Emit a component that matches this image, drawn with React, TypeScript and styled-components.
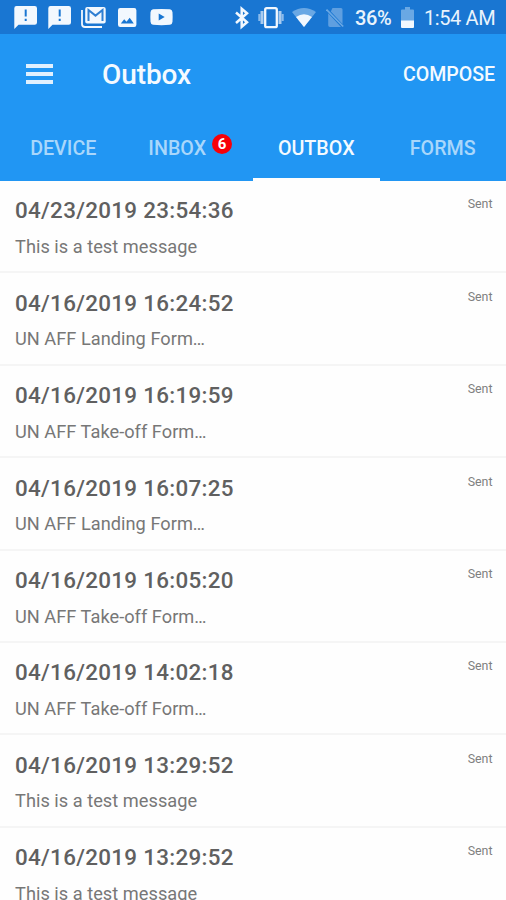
import React from 'react';
import styled, { createGlobalStyle } from 'styled-components';

const GlobalStyle = createGlobalStyle`
  * { box-sizing: border-box; }
  html, body { margin: 0; height: 100%; overflow: hidden; background: #fefefe; }
  body { font-family: Roboto, sans-serif; }
`;

const Screen = styled.div`
  width: 506px;
  height: 900px;
  overflow: hidden;
  display: flex;
  flex-direction: column;
  background: #fefefe;
`;

const StatusBar = styled.header`
  flex: none;
  height: 34px;
  padding: 0 11px 0 14px;
  display: flex;
  align-items: center;
  justify-content: space-between;
  background: #1976d2;
  color: #e9f3fc;
`;

const StatusGroup = styled.div`
  display: flex;
  align-items: center;
`;

const StatusIcon = styled.svg<{ $w: number; $gap?: number }>`
  display: block;
  flex: none;
  width: ${p => p.$w}px;
  height: 34px;
  margin-right: ${p => p.$gap ?? 0}px;
  fill: #f2f8fe;
`;

const StatusText = styled.span<{ $width: number; $gap?: number; $weight?: number; $spacing?: number }>`
  width: ${p => p.$width}px;
  margin-right: ${p => p.$gap ?? 0}px;
  font-size: 20px;
  line-height: 34px;
  padding-top: 2px;
  font-weight: ${p => p.$weight ?? 400};
  letter-spacing: ${p => p.$spacing ?? 0}px;
  white-space: nowrap;
`;

const Toolbar = styled.div`
  flex: none;
  height: 80px;
  padding: 0 11px 0 26px;
  display: flex;
  align-items: center;
  background: #2196f3;
  color: #f4faff;
`;

const MenuButton = styled.button`
  border: 0;
  padding: 0;
  width: 27px;
  height: 20px;
  margin-right: 49px;
  display: flex;
  flex-direction: column;
  justify-content: space-between;
  background: none;
`;

const MenuBar = styled.span`
  display: block;
  height: 4px;
  background: #e0f0fe;
`;

const Title = styled.h1`
  flex: 1;
  margin: 0;
  padding-top: 1px;
  font-size: 28px;
  font-weight: 500;
  letter-spacing: -0.1px;
`;

const ComposeButton = styled.button`
  border: 0;
  padding: 1px 0 0;
  background: none;
  color: inherit;
  font: 500 19.6px Roboto, sans-serif;
  letter-spacing: -0.05px;
`;

const Tabs = styled.nav`
  flex: none;
  height: 66.5px;
  display: grid;
  grid-template-columns: repeat(4, 1fr);
  background: #2196f3;
`;

const Tab = styled.div<{ $active?: boolean }>`
  display: flex;
  justify-content: center;
  align-items: center;
  padding-top: 5px;
  font-size: 19.7px;
  font-weight: 500;
  color: ${p => (p.$active ? '#f4faff' : '#a9d7fb')};
  border-bottom: 3px solid ${p => (p.$active ? '#fefefe' : 'transparent')};
`;

const Badge = styled.span`
  width: 20px;
  height: 20px;
  margin: -8px -1px 0 6px;
  border-radius: 50%;
  display: flex;
  align-items: center;
  justify-content: center;
  background: #f70008;
  color: #fff;
  font-size: 15px;
  font-weight: 700;
`;

const List = styled.main`
  flex: 1;
  min-height: 0;
  overflow: hidden;
`;

const Row = styled.article`
  height: 92.4px;
  padding: 15.5px 13.500px 0 15px;
  display: flex;
  justify-content: space-between;
  border-bottom: 2px solid #f5f5f5;

  &:first-child {
    height: 92.900px;
  }
`;

const Stamp = styled.div`
  font-size: 22.4px;
  line-height: 28px;
  font-weight: 500;
  letter-spacing: 0.31px;
  color: #606060;
`;

const Preview = styled.div`
  margin-top: 10.5px;
  font-size: 18.2px;
  line-height: 24px;
  letter-spacing: 0.03px;
  color: #777;
`;

const State = styled.span`
  font-size: 12.4px;
  line-height: 16px;
  color: #808080;
`;

const messages = [
  { stamp: '04/23/2019 23:54:36', preview: 'This is a test message' },
  { stamp: '04/16/2019 16:24:52', preview: 'UN AFF Landing Form…' },
  { stamp: '04/16/2019 16:19:59', preview: 'UN AFF Take-off Form…' },
  { stamp: '04/16/2019 16:07:25', preview: 'UN AFF Landing Form…' },
  { stamp: '04/16/2019 16:05:20', preview: 'UN AFF Take-off Form…' },
  { stamp: '04/16/2019 14:02:18', preview: 'UN AFF Take-off Form…' },
  { stamp: '04/16/2019 13:29:52', preview: 'This is a test message' },
  { stamp: '04/16/2019 13:29:52', preview: 'This is a test message' },
];

const AlertMessageIcon = ({ gap }: { gap: number }) => (
  <StatusIcon $w={23} $gap={gap} viewBox="0 0 23 34">
    <path fillRule="evenodd" d="M2.500 6h18.200a2.300 2.300 0 0 1 2.300 2.300v14.200a2.300 2.300 0 0 1-2.300 2.300H4.500L.3 29V8.300A2.300 2.300 0 0 1 2.500 6zM10.700 9.500v7h2v-7zM10.700 18.800v2.200h2v-2.200z" />
  </StatusIcon>
);

const MailStackIcon = () => (
  <StatusIcon $w={25} $gap={12} viewBox="0 0 25 34">
    <path d="M1 10v14a3 3 0 0 0 3 3h17" fill="none" stroke="#f2f8fe" strokeWidth="1.800" />
    <rect x="4.200" y="7" width="20.500" height="16.500" rx="2" />
    <path d="M7.500 21V10l7 5.600 7-5.600v11" fill="none" stroke="#2f7fd2" strokeWidth="2" />
  </StatusIcon>
);

const PictureIcon = () => (
  <StatusIcon $w={19} $gap={13} viewBox="0 0 19 34">
    <path fillRule="evenodd" d="M2.200 8h14a2.200 2.200 0 0 1 2.200 2.200v14.500a2.200 2.200 0 0 1-2.200 2.200h-14A2.200 2.200 0 0 1 0 24.700V10.200A2.200 2.200 0 0 1 2.200 8zM2.800 23.500h13L11.700 17.700l-3.200 4-2.300-2.500z" />
  </StatusIcon>
);

const VideoIcon = () => (
  <StatusIcon $w={23} viewBox="0 0 23 34">
    <path fillRule="evenodd" d="M3 9.300q8.500-.8 17 0 2.300.3 2.500 3 .3 4.700 0 9.500-.2 2.700-2.500 3-8.500.8-17 0-2.300-.3-2.500-3-.3-4.800 0-9.500.2-2.700 2.500-3zM8.700 13.500v7l6-3.500z" />
  </StatusIcon>
);

const BluetoothIcon = () => (
  <StatusIcon $w={14} $gap={9} viewBox="0 0 14 34">
    <path d="M1 12.500l11 9.700-5.300 4.500V8.800l5.300 4.500L1 23" fill="none" stroke="#f2f8fe" strokeWidth="2.500" />
  </StatusIcon>
);

const VibrateIcon = () => (
  <StatusIcon $w={26} $gap={8} viewBox="0 0 26 34">
    <rect x="7.200" y="8.200" width="11.600" height="19" rx="1.500" fill="none" stroke="#f2f8fe" strokeWidth="2.300" />
    <path d="M4 11v13M22 11v13" stroke="#a9ccf0" strokeWidth="3" />
    <path d="M1.400 14v7M24.600 14v7" stroke="#8cbbeb" strokeWidth="2.200" />
  </StatusIcon>
);

const WifiIcon = () => (
  <StatusIcon $w={24} $gap={10} viewBox="0 0 24 34">
    <path d="M0 12q12-8 24 0L12 27z" fill="#6aa8e4" />
    <path d="M4 17q8-5.300 16 0L12 27z" />
  </StatusIcon>
);

const NoSimIcon = () => (
  <StatusIcon $w={18} $gap={11} viewBox="0 0 18 34">
    <path d="M6.500 8h8.500q1.500 0 1.500 1.500v14.500L4.800 11.500zM2.200 13.200 15 27H4q-1.800 0-1.800-1.800z" fill="#5f9fe0" />
    <path d="M.5 9.500l16.700 17" stroke="#6aa8e4" strokeWidth="1.700" />
  </StatusIcon>
);

const BatteryIcon = () => (
  <StatusIcon $w={13} $gap={10} viewBox="0 0 13 34">
    <path d="M4 7h5v2.500h3q1 0 1 1V21H0V10.500q0-1 1-1h3z" fill="#6aa8e4" />
    <path d="M0 20.500h13V27q0 1-1 1H1q-1 0-1-1z" />
  </StatusIcon>
);

export default function App() {
  return (
    <>
      <GlobalStyle />
      <Screen>
        <StatusBar>
          <StatusGroup>
            <AlertMessageIcon gap={11} />
            <AlertMessageIcon gap={10} />
            <MailStackIcon />
            <PictureIcon />
            <VideoIcon />
          </StatusGroup>
          <StatusGroup>
            <BluetoothIcon />
            <VibrateIcon />
            <WifiIcon />
            <NoSimIcon />
            <StatusText $width={36} $gap={10} $weight={500} $spacing={-0.4}>36%</StatusText>
            <BatteryIcon />
            <StatusText $width={71} $spacing={-0.4}>1:54 AM</StatusText>
          </StatusGroup>
        </StatusBar>
        <Toolbar>
          <MenuButton aria-label="Menu">
            <MenuBar />
            <MenuBar />
            <MenuBar />
          </MenuButton>
          <Title>Outbox</Title>
          <ComposeButton>COMPOSE</ComposeButton>
        </Toolbar>
        <Tabs>
          <Tab>DEVICE</Tab>
          <Tab>INBOX<Badge>6</Badge></Tab>
          <Tab $active>OUTBOX</Tab>
          <Tab>FORMS</Tab>
        </Tabs>
        <List>
          {messages.map((m, i) => (
            <Row key={i}>
              <div>
                <Stamp>{m.stamp}</Stamp>
                <Preview>{m.preview}</Preview>
              </div>
              <State>Sent</State>
            </Row>
          ))}
        </List>
      </Screen>
    </>
  );
}
